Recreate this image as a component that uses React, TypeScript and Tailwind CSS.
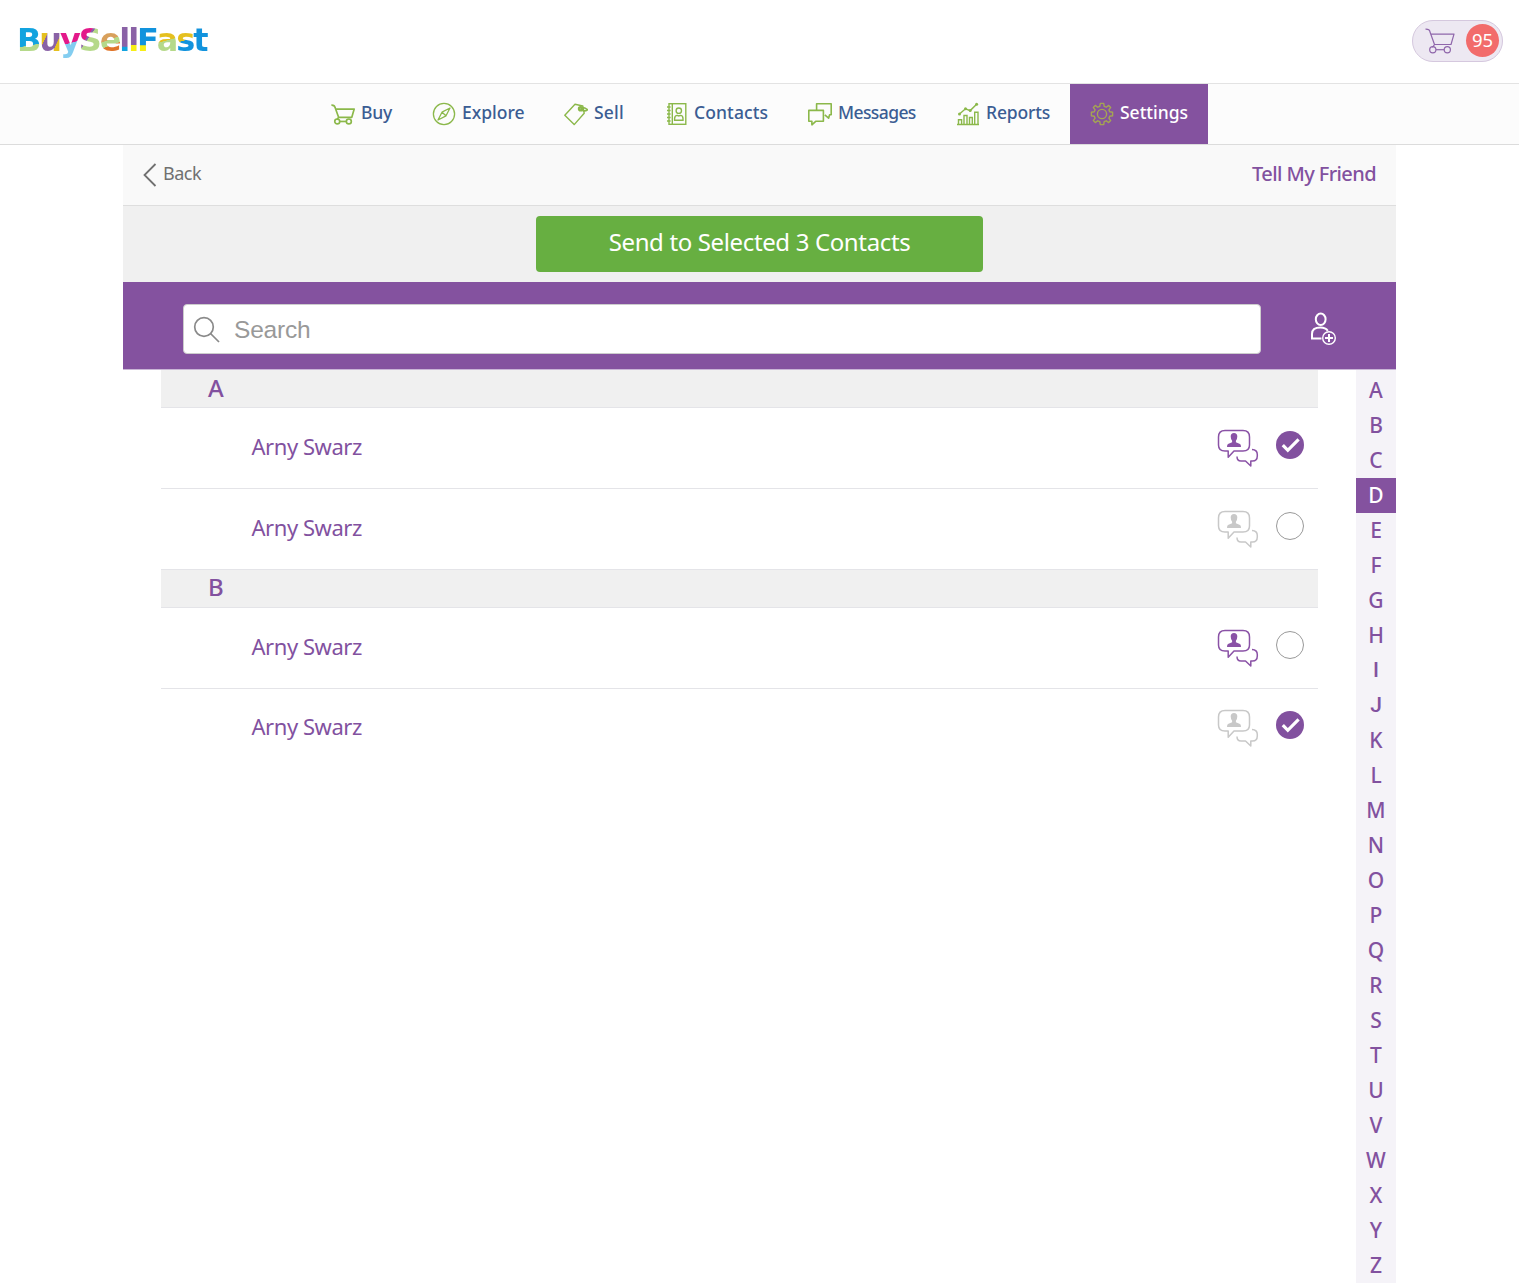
import React from "react";

const navText = "whitespace-nowrap text-[17.5px] font-medium leading-6";

function CartIcon({ className, width = 2.1 }: { className?: string; width?: number }) {
  return (
    <svg className={className} viewBox="0 0 30 26" fill="none" stroke="currentColor" strokeWidth={width} strokeLinejoin="round">
      <path d="M0.5 1.2 Q4.5 1 5 4 L9.5 16.5 H26 L29 6.2 H6 M9.5 16.5 L7.5 19.5" />
      <circle cx="7.8" cy="21.7" r="3.1" />
      <circle cx="22.3" cy="21.7" r="3.1" />
      <path d="M11 21.7 H19.2" />
    </svg>
  );
}

function CompassIcon() {
  return (
    <svg className="size-6" viewBox="0 0 24 24" fill="none" stroke="currentColor" strokeWidth="1.3" strokeLinejoin="round">
      <circle cx="12" cy="12" r="10.6" />
      <path d="M18 6 L14 13.8 L6 18 L10 10.2 Z M10 10.2 L14 13.8" />
    </svg>
  );
}

function TagIcon() {
  return (
    <svg className="h-6 w-6" viewBox="0 0 24 24" fill="none" stroke="currentColor" strokeWidth="1.4" strokeLinejoin="round">
      <path d="M0.8 13.2 L11 2.3 L18.8 4 L20.2 11.2 L10.2 22.6 Z" />
      <circle cx="16.6" cy="6.8" r="1.6" strokeWidth="2.4" />
      <path d="M16 5.8 Q20 4.8 23.6 7.8 Q20.4 10 17.6 7.8 L20.3 5.6" strokeWidth="1.6" />
    </svg>
  );
}

function ContactsIcon() {
  return (
    <svg className="ml-[1px] -mr-[1px] size-6" viewBox="0 0 24 24" fill="none" stroke="currentColor" strokeWidth="1.4">
      <rect x="4" y="1.7" width="16.8" height="20.6" />
      <path d="M7.3 1.6 V22.4 M2 5 H5.6 M2 8.5 H5.6 M2 12 H5.6 M2 15.5 H5.6 M2 19 H5.6" />
      <circle cx="13.8" cy="8.7" r="2.7" />
      <path d="M9.6 18.2 V16.5 Q9.8 13.4 12.3 13.4 L13.8 14 L15.3 13.4 Q18 13.4 18 16.5 V18.2 Z" />
    </svg>
  );
}

function MessagesIcon() {
  return (
    <svg className="size-6" viewBox="0 0 24 24" fill="none" stroke="currentColor" strokeWidth="1.6" strokeLinejoin="round">
      <path d="M8.6 8 V1.7 H23.2 V12.8 H21.6 L20.6 16.2 L16.8 12.8" />
      <path d="M0.8 8.4 H15.4 V19.3 H7.7 L3.9 22.8 V19.3 H0.8 Z" />
    </svg>
  );
}

function ReportsIcon() {
  return (
    <svg className="size-6" viewBox="0 0 24 24" fill="none" stroke="currentColor" strokeWidth="1.4">
      <path d="M1 22.5 H23 M2.5 22.4 V17.8 H5.6 V22.4 M8 22.4 V13.5 H11 V22.4 M13.5 22.4 V15.5 H16.3 V22.4 M18.7 22.4 V10.2 H22 V22.4" />
      <path d="M3.5 12 L9.5 6.8 L14.2 8.6 L20.6 2.2" />
      <g fill="currentColor" stroke="none">
        <circle cx="3.5" cy="12" r="1.5" />
        <circle cx="9.5" cy="6.8" r="1.5" />
        <circle cx="14.2" cy="8.6" r="1.5" />
        <circle cx="20.6" cy="2.2" r="1.5" />
      </g>
    </svg>
  );
}

function GearIcon() {
  return (
    <svg className="size-6" viewBox="0 0 24 24" fill="none" stroke="currentColor" strokeWidth="1.4" strokeLinejoin="round">
      <path d="M10.3 1.4 H13.7 L14.2 4.3 L16.3 5.2 L18.7 3.4 L20.7 5.4 L18.9 7.8 L19.7 9.8 L22.6 10.3 V13.7 L19.7 14.2 L18.9 16.2 L20.7 18.6 L18.7 20.6 L16.3 18.8 L14.2 19.7 L13.7 22.6 H10.3 L9.8 19.7 L7.7 18.8 L5.3 20.6 L3.3 18.6 L5.1 16.2 L4.3 14.2 L1.4 13.7 V10.3 L4.3 9.8 L5.1 7.8 L3.3 5.4 L5.3 3.4 L7.7 5.2 L9.8 4.3 Z" />
      <circle cx="12" cy="12" r="4.6" />
    </svg>
  );
}

function ChatIcon({ className }: { className: string }) {
  return (
    <svg className={className} viewBox="0 0 42 38" fill="none" stroke="currentColor" strokeWidth="1.5" strokeLinejoin="round">
      <path d="M8 1.5 H26 Q32.5 1.5 32.5 8 V16 Q32.5 22 26 22 H17 L11.2 28.3 V22 H8 Q1.5 22 1.5 16 V8 Q1.5 1.5 8 1.5 Z" />
      <path d="M35 20.5 Q40.3 20.7 40.3 25.5 V27 Q40.3 32 35.5 32 H33.8 V37 L28.5 32 H24 Q20 32 20 27.5" />
      <path
        d="M17 3.9 Q20.3 3.9 20.3 7.5 Q20.3 10 18.9 11.7 V13.3 L23 15 Q24 15.6 24 18 H10 Q10 15.6 11 15 L15.1 13.3 V11.7 Q13.7 10 13.7 7.5 Q13.7 3.9 17 3.9 Z"
        fill="currentColor"
        stroke="none"
      />
    </svg>
  );
}

function AddPersonIcon() {
  return (
    <svg className="h-[34px] w-[28px] text-white" viewBox="0 0 28 34" fill="none" stroke="currentColor" strokeWidth="2">
      <ellipse cx="11.7" cy="7.3" rx="4.9" ry="5.7" />
      <path d="M12.5 26.5 H3 V22 Q3 15.6 11.5 15.6 Q16.5 15.6 18.8 18.8" />
      <circle cx="20" cy="26" r="6.3" strokeWidth="1.4" />
      <path d="M20 22 V30 M16 26 H24" />
    </svg>
  );
}

const logo = [
  ["B", "bg-[linear-gradient(170deg,#12a3df_62%,#b5d98a_63%)]"],
  ["u", "bg-[linear-gradient(115deg,#e5c01f_35%,#8a62a6_36%,#8a62a6_68%,#e5c01f_69%)]"],
  ["y", "bg-[linear-gradient(165deg,#e3198a_56%,#83cdf0_57%)]"],
  ["S", "bg-[linear-gradient(125deg,#e3198a_38%,#8a62a6_39%,#8a62a6_43%,#b5d98a_44%)]"],
  ["e", "bg-[linear-gradient(160deg,#d8a05c_48%,#b5d98a_49%,#b5d98a_61%,#e0762a_62%)]"],
  ["l", "bg-[linear-gradient(180deg,#8a62a6_66%,#12a3df_67%)]"],
  ["l", "bg-[linear-gradient(180deg,#8a62a6_62%,#f7ee16_63%)]"],
  ["F", "bg-[linear-gradient(180deg,#1293dd_63%,#f7ee16_64%)]"],
  ["a", "bg-[linear-gradient(165deg,#e5c01f_50%,#b5d98a_51%)]"],
  ["s", "bg-[linear-gradient(165deg,#e5c01f_50%,#1293dd_51%)]"],
  ["t", "bg-[#1293dd]"],
];

const nav = [
  { label: "Buy", box: "w-[101px]", track: "tracking-[-0.2px]", icon: <CartIcon className="h-[21px] w-6" /> },
  { label: "Explore", box: "w-[132px]", track: "", icon: <CompassIcon /> },
  { label: "Sell", box: "w-[100px]", track: "tracking-[0.2px]", icon: <TagIcon /> },
  { label: "Contacts", box: "w-[144px]", track: "tracking-[0.1px]", icon: <ContactsIcon /> },
  { label: "Messages", box: "w-[148px]", track: "tracking-[-0.6px]", icon: <MessagesIcon /> },
  { label: "Reports", box: "w-[134px]", track: "tracking-[-0.15px]", icon: <ReportsIcon /> },
  { label: "Settings", box: "w-[138px]", track: "", icon: <GearIcon />, active: true },
];

const groups = [
  {
    letter: "A",
    head: "leading-[36px]",
    rows: [
      { chat: true, checked: true, box: "h-[81px] border-b" },
      { chat: false, checked: false, box: "h-[81px] border-b" },
    ],
  },
  {
    letter: "B",
    head: "leading-[34px]",
    rows: [
      { chat: true, checked: false, box: "h-[81px] border-b pb-[1px]" },
      { chat: false, checked: true, box: "h-[78px]" },
    ],
  },
];

function Check({ checked }: { checked: boolean }) {
  if (!checked) return <span className="size-[28px] rounded-full border border-[#999]" />;
  return (
    <span className="flex size-[28px] items-center justify-center rounded-full bg-[#82519f]">
      <svg className="size-[28px]" viewBox="0 0 28 28" fill="none" stroke="white" strokeWidth="3.2">
        <path d="M6.8 14.2 L11.8 19.3 L22.6 8.3" />
      </svg>
    </span>
  );
}

export default function App() {
  return (
    <div className="h-[1283px] overflow-hidden bg-white font-['Noto_Sans',sans-serif]">
      <header className="flex h-[84px] items-start justify-between border-b border-[#e3e3e3] pl-[17px] pr-4">
        <div className="mt-[20px] flex h-10 items-center font-['DejaVu_Sans',sans-serif] text-[32px] font-bold leading-10 tracking-[-2.1px]">
          {logo.map(([ch, bg], i) => (
            <span key={i} className={`bg-clip-text pr-[2.1px] -mr-[2.1px] text-transparent ${bg}`}>{ch}</span>
          ))}
        </div>
        <div className="mt-[20px] flex h-[42px] w-[91px] items-center justify-between rounded-full border border-[#d5c8de] bg-[#ede8f2] pl-[12px] pr-[3px] text-[#8f66ab]">
          <CartIcon className="h-[26px] w-[30px]" width={1.2} />
          <span className="mb-[2px] flex size-[33px] items-center justify-center rounded-full bg-[#f26b6b] text-[18.5px] text-white">95</span>
        </div>
      </header>
      <nav className="flex h-[61px] justify-center border-b border-[#dcdcdc] bg-[#fcfcfc]">
        {nav.map((n) => (
          <a key={n.label} className={`flex h-[60px] items-center gap-[6px] pl-5 ${n.box} ${n.active ? "bg-[#84529f] text-white" : "text-[#3b5d93]"}`}>
            <span className={n.active ? "shrink-0 text-[#a5a552]" : "shrink-0 text-[#8bb84a]"}>{n.icon}</span>
            <span className={`${navText} ${n.track} -mt-[5px]`}>{n.label}</span>
          </a>
        ))}
      </nav>
      <main className="mx-auto w-[1273px]">
        <div className="flex h-[61px] items-center justify-between border-b border-[#dedede] bg-[#f9f9f9] px-5">
          <a className="flex items-center gap-[6px] text-[#707070]">
            <svg className="h-6 w-[14px]" viewBox="0 0 14 24" fill="none" stroke="currentColor" strokeWidth="1.8">
              <path d="M12.5 1 L1.5 12 L12.5 23" />
            </svg>
            <span className="-mt-[4px] text-[18px] leading-6 tracking-[-0.5px]">Back</span>
          </a>
          <h1 className="-mt-[2px] text-[20px] font-medium leading-6 tracking-[-0.6px] text-[#82519f]">Tell My Friend</h1>
        </div>
        <div className="flex h-[76px] items-center justify-center bg-[#f0f0f0]">
          <button className="h-14 w-[447px] rounded-[4px] bg-[#67af41] pb-[4px] text-[24px] tracking-[-0.36px] text-white">Send to Selected 3 Contacts</button>
        </div>
        <div className="flex h-[88px] items-start border-b border-[#c9b5d6] bg-[#84529f] pl-[60px] pt-[22px]">
          <div className="flex h-[50px] w-[1078px] items-center rounded-[4px] border border-[#ccc] bg-white pl-[9px]">
            <svg className="size-[27px]" viewBox="0 0 27 27" fill="none" stroke="#8a8a8a" strokeWidth="1.7">
              <circle cx="11" cy="11" r="9.3" />
              <path d="M17.5 17.5 L26 26" />
            </svg>
            <span className="ml-[14px] mt-[2px] font-['Liberation_Sans',sans-serif] text-[24.5px] tracking-[-0.2px] text-[#999]">Search</span>
          </div>
          <div className="ml-[48px] mt-[8px]"><AddPersonIcon /></div>
        </div>
        <div className="flex justify-between pl-[38px] text-[#82519f]">
          <div className="w-[1157px]">
            {groups.map((g) => (
              <section key={g.letter}>
                <h2 className={`h-[38px] border-b border-[#e4e4e8] bg-[#f0f0f0] pl-[47px] text-[24px] font-medium ${g.head}`}>{g.letter}</h2>
                {g.rows.map((r, i) => (
                  <div key={i} className={`flex items-center border-[#e4e4e8] pl-[90.5px] pr-[14px] ${r.box}`}>
                    <span className="mb-[4px] grow text-[22px] leading-7 tracking-[-0.45px]">Arny Swarz</span>
                    <ChatIcon className={`mr-[17px] h-[38px] w-[42px] ${r.chat ? "text-[#8a52a6]" : "text-[#c8c8c8]"}`} />
                    <span className="-mt-[6px] flex"><Check checked={r.checked} /></span>
                  </div>
                ))}
              </section>
            ))}
          </div>
          <aside className="flex w-10 flex-col bg-[#f5f3f8] pt-[3px] text-center text-[21px] font-medium leading-[34px]">
            {"ABCDEFGHIJKLMNOPQRSTUVWXYZ".split("").map((c) => (
              <a
                key={c}
                className={`h-[35px] ${c === "D" ? "bg-[#84529f] text-white" : ""} ${c === "I" || c === "J" ? "font-['Roboto',sans-serif]" : ""}`}
              >
                {c}
              </a>
            ))}
          </aside>
        </div>
      </main>
    </div>
  );
}
